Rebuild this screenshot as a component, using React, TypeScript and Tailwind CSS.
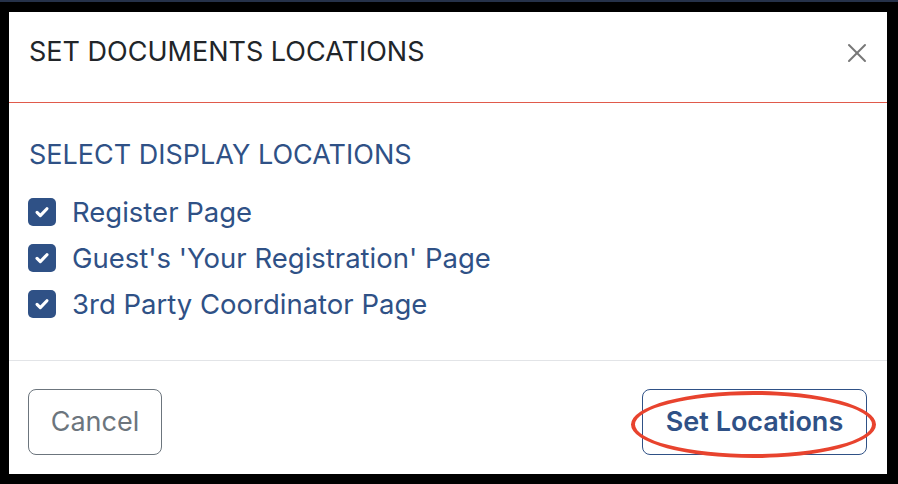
import { X } from 'lucide-react'

const locations = [
  'Register Page',
  "Guest's 'Your Registration' Page",
  '3rd Party Coordinator Page',
]

function CheckIcon() {
  return (
    <svg width="18" height="18" viewBox="0 0 16 16" fill="none">
      <path d="M3.6 8.4l2.9 2.8 5.9-6.1" stroke="white" strokeWidth="2.8" strokeLinecap="round" strokeLinejoin="round" />
    </svg>
  )
}

export default function App() {
  return (
    <div className="w-[898px] h-[484px] bg-black overflow-hidden font-['Inter',sans-serif]">
      <div className="h-[2px] bg-[#26324a]" />
      <div className="flex pt-[10px] pl-[9px]">
        <div className="w-[878px] h-[462px] bg-white flex flex-col">
          {/* header */}
          <div className="h-[91px] shrink-0 flex items-start justify-between pl-[20px] pr-[14px] pt-[24px] border-b border-[#e05a4b]">
            <h1 className="text-[27px] leading-[32px] text-[#212529]">SET DOCUMENTS LOCATIONS</h1>
            <X className="mt-[1px] text-[#777777]" size={32} strokeWidth={1.5} />
          </div>

          {/* body */}
          <div className="pl-[19px] pt-[36px] pb-[33px] border-b border-[#e2e4e7]">
            <h2 className="text-[27px] leading-[32px] text-[#2f5186] pl-[1px]">SELECT DISPLAY LOCATIONS</h2>
            <div className="mt-[18px] flex flex-col">
              {locations.map((label) => (
                <label key={label} className="h-[46px] flex items-center gap-[16px]">
                  <span className="w-[28px] h-[28px] rounded-[5px] bg-[#2f5186] flex items-center justify-center">
                    <CheckIcon />
                  </span>
                  <span className="text-[27.5px] leading-[46px] text-[#2f5186]">{label}</span>
                </label>
              ))}
            </div>
          </div>

          {/* footer */}
          <div className="flex items-start justify-between pt-[28px] pl-[19px] pr-[20px]">
            <button className="w-[134px] h-[66px] rounded-[8px] border border-[#6c757d] text-[27px] text-[#6c757d]">
              Cancel
            </button>
            <div className="relative">
              <button className="w-[225px] h-[66px] rounded-[8px] border border-[#2f5186] text-[27px] font-semibold text-[#2f5186]">
                Set Locations
              </button>
              <div className="absolute left-[-11px] top-[2px] w-[245px] h-[67px] rounded-[50%] border-[4px] border-[#e8432e] pointer-events-none" />
            </div>
          </div>
        </div>
      </div>
    </div>
  )
}
